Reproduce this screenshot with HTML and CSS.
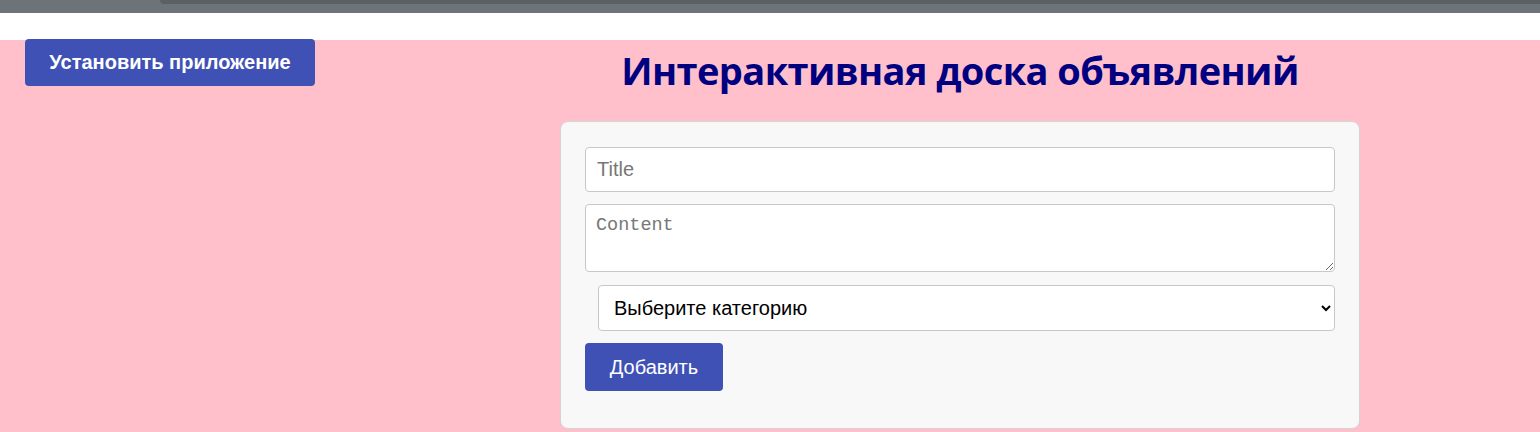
FILE: index.html
```html
<!DOCTYPE html>
<html lang="ru">
<head>
<meta charset="utf-8">
<title>Доска объявлений</title>
<link rel="stylesheet" href="styles.css">
</head>
<body>
<div class="chrome"><div class="chrome-tab"></div></div>
<div class="gap"></div>
<div class="page">
  <div class="side">
    <button class="install-btn">Установить приложение</button>
  </div>
  <main class="main">
    <h1 class="title">Интерактивная доска объявлений</h1>
    <form class="card">
      <input class="field" type="text" placeholder="Title">
      <textarea class="field area" placeholder="Content"></textarea>
      <select class="field select">
        <option>Выберите категорию</option>
      </select>
      <div class="actions"><button type="button" class="add-btn">Добавить</button></div>
    </form>
  </main>
</div>
</body>
</html>
```
FILE: styles.css
```css
html, body {
  margin: 0;
  padding: 0;
}
body {
  font-family: "Liberation Sans", Arial, sans-serif;
  background: #ffc0cb;
  height: 432px;
  overflow: hidden;
}
.chrome {
  height: 13px;
  background: #6c7479;
  position: relative;
}
.chrome-tab {
  position: absolute;
  left: 160px;
  right: 0;
  top: 0;
  height: 4px;
  background: #596163;
  border-bottom-left-radius: 6px;
}
.gap {
  height: 27px;
  background: #fff;
}
.page {
  display: flex;
  align-items: flex-start;
}
.side {
  width: 380px;
  padding-left: 25px;
  box-sizing: border-box;
  margin-top: -1px;
}
.install-btn {
  background: #3f51b5;
  color: #fff;
  border: none;
  border-radius: 4px;
  font-family: "Liberation Sans", Arial, sans-serif;
  font-weight: bold;
  font-size: 20px;
  height: 47px;
  width: 290px;
  padding: 0;
  cursor: pointer;
}
.main {
  flex: 1;
  display: flex;
  flex-direction: column;
  align-items: center;
}
.title {
  margin: 8px 0 0;
  height: 73px;
  font-family: "Open Sans", "Noto Sans", sans-serif;
  font-weight: bold;
  font-size: 38px;
  letter-spacing: -0.6px;
  color: #000080;
  line-height: 44px;
}
.card {
  width: 800px;
  box-sizing: border-box;
  background: #f8f8f8;
  border: 1px solid #d4d4d4;
  border-radius: 8px;
  padding: 24px 24px 37px;
  display: flex;
  flex-direction: column;
  gap: 12px;
}
.field {
  box-sizing: border-box;
  width: 750px;
  border: 1px solid #c8c8c8;
  border-radius: 4px;
  background: #fff;
  font-family: "Liberation Sans", Arial, sans-serif;
  font-size: 20px;
  padding: 0 11px;
  margin: 0;
}
input.field {
  height: 45px;
  margin-top: 1px;
}
.field::placeholder {
  color: #777;
}
.area {
  height: 68px;
  padding: 10px 10px;
  font-family: "Liberation Mono", "DejaVu Sans Mono", monospace;
  font-size: 18.5px;
  resize: vertical;
}
.select {
  width: 737px;
  margin-left: 13px;
  height: 46px;
  color: #000;
  padding: 0 11px;
  margin-top: 1px;
}
.actions {
  display: flex;
}
.add-btn {
  background: #3f51b5;
  color: #fff;
  border: none;
  border-radius: 4px;
  font-family: "Liberation Sans", Arial, sans-serif;
  font-size: 20px;
  width: 138px;
  height: 48px;
  padding: 0;
  cursor: pointer;
}
```
